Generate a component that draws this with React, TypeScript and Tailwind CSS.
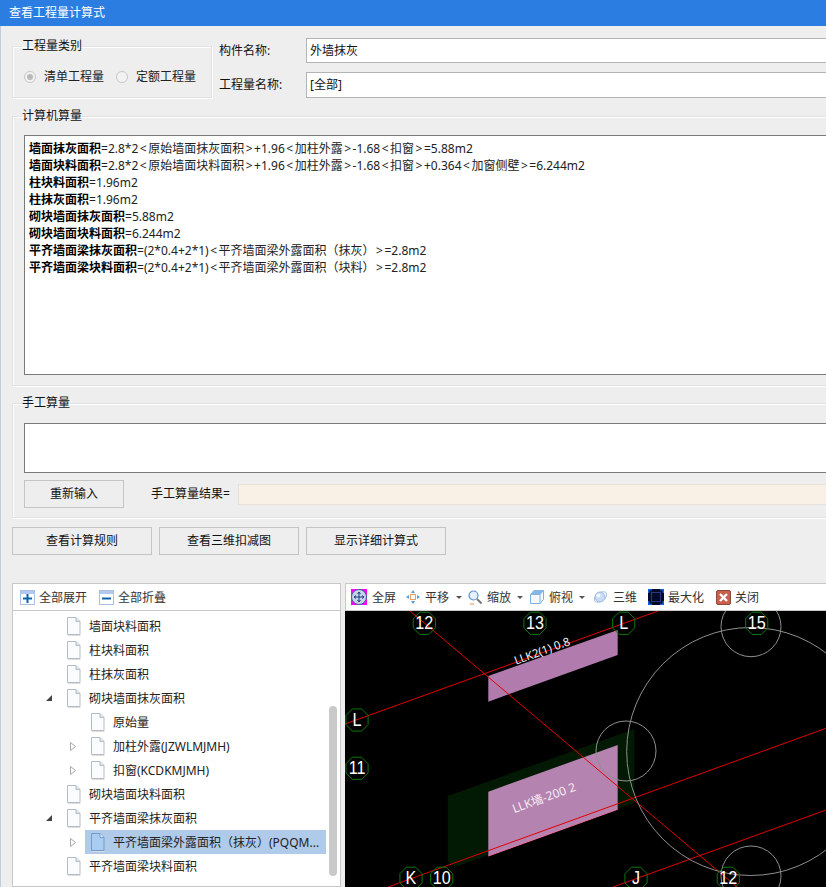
import React from 'react';

const formulas: [string, string][] = [
    ['墙面抹灰面积', '=2.8*2<原始墙面抹灰面积>+1.96<加柱外露>-1.68<扣窗>=5.88m2'],
    ['墙面块料面积', '=2.8*2<原始墙面块料面积>+1.96<加柱外露>-1.68<扣窗>+0.364<加窗侧壁>=6.244m2'],
    ['柱块料面积', '=1.96m2'],
    ['柱抹灰面积', '=1.96m2'],
    ['砌块墙面抹灰面积', '=5.88m2'],
    ['砌块墙面块料面积', '=6.244m2'],
    ['平齐墙面梁抹灰面积', '=(2*0.4+2*1)<平齐墙面梁外露面积（抹灰）>=2.8m2'],
    ['平齐墙面梁块料面积', '=(2*0.4+2*1)<平齐墙面梁外露面积（块料）>=2.8m2'],
];

type TreeRow = { label: string; level: 0 | 1; arrow?: 'open' | 'closed'; selected?: boolean };

const treeRows: TreeRow[] = [
    { label: '墙面块料面积', level: 0 },
    { label: '柱块料面积', level: 0 },
    { label: '柱抹灰面积', level: 0 },
    { label: '砌块墙面抹灰面积', level: 0, arrow: 'open' },
    { label: '原始量', level: 1 },
    { label: '加柱外露(JZWLMJMH)', level: 1, arrow: 'closed' },
    { label: '扣窗(KCDKMJMH)', level: 1, arrow: 'closed' },
    { label: '砌块墙面块料面积', level: 0 },
    { label: '平齐墙面梁抹灰面积', level: 0, arrow: 'open' },
    { label: '平齐墙面梁外露面积（抹灰）(PQQM...', level: 1, arrow: 'closed', selected: true },
    { label: '平齐墙面梁块料面积', level: 0 },
];

const axes = [
    { x: 79.3, y: 12.3, t: '12' },
    { x: 190, y: 12.3, t: '13' },
    { x: 278.7, y: 12.3, t: 'L' },
    { x: 411.7, y: 12.3, t: '15' },
    { x: 12, y: 109, t: 'L' },
    { x: 12, y: 157.3, t: '11' },
    { x: 66, y: 267.3, t: 'K' },
    { x: 96.7, y: 267.3, t: '10' },
    { x: 291, y: 267.3, t: 'J' },
    { x: 383.3, y: 267.3, t: '12' },
];

const octagon = (cx: number, cy: number) => {
    const pts: string[] = [];
    for (let i = 0; i < 8; i++) {
        const a = (Math.PI / 4) * i + Math.PI / 8;
        pts.push(`${cx + 12 * Math.cos(a)},${cy + 12 * Math.sin(a)}`);
    }
    return pts.join(' ');
};

const DocIcon = ({ selected }: { selected?: boolean }) => (
    <svg width="15" height="19" viewBox="0 0 15 19" className="shrink-0">
        <path d="M1.5 .5H10L14 4.5V17.5H1.5Z" fill={selected ? '#a9cdf0' : '#fbfcfe'} stroke={selected ? '#6f9cc8' : '#b4bcc8'} />
        <path d="M10 .5V4.5H14" fill="#dfe6f0" stroke={selected ? '#6f9cc8' : '#b4bcc8'} />
        <path d="M2 18.5H14.5" stroke="#dcdcdc" />
    </svg>
);

const Caret = () => (
    <svg width="6" height="3" viewBox="0 0 6 3" className="shrink-0">
        <path d="M0 0H6L3 3Z" fill="#555" />
    </svg>
);

const ToolItem = ({ icon, label, gap = 'gap-[5px]' }: { icon: React.ReactNode; label: string; gap?: string }) => (
    <div className={`flex items-center ${gap}`}>
        {icon}
        <span className="pt-[1px] text-[12px] text-[#333]">{label}</span>
    </div>
);

const Group = ({ title, className, children }: { title: string; className: string; children: React.ReactNode }) => (
    <fieldset className={`border border-[#e2e2e2] shadow-[1px_1px_0_#fff,inset_1px_1px_0_#fff] ${className}`}>
        <legend className="-ml-[2px] text-[12px] leading-[14px] text-[#111]">{title}</legend>
        {children}
    </fieldset>
);

const GrayButton = ({ label, className }: { label: string; className: string }) => (
    <button className={`border border-[#c4c4c4] bg-[#eeeeee] text-[12px] text-[#111] ${className}`}>{label}</button>
);

const Radio = ({ checked, label }: { checked?: boolean; label: string }) => (
    <div className="flex items-center gap-[8px]">
        <span className="flex h-[12px] w-[12px] items-center justify-center rounded-full border border-[#c8c8c8] bg-[#f2f2f2]">
            {checked && <span className="h-[6px] w-[6px] rounded-full bg-[#b8b8b8]" />}
        </span>
        <span className="text-[12px] text-[#222]">{label}</span>
    </div>
);

// chevrons sit with a little air around them in the original
const FormulaRest = ({ text }: { text: string }) => (
    <>
        {text.split(/([<>])/).map((part, i) =>
            part === '<' || part === '>' ? (
                <span key={i} className="mx-[1.5px]">
                    {part}
                </span>
            ) : (
                <span key={i}>{part}</span>
            ),
        )}
    </>
);

const CadView = () => (
    <svg width="481" height="276" viewBox="0 0 481 276" className="block bg-black">
        <polygon points="102.7,185 289.3,118 289.3,192 286,193 110,256 102.7,251" fill="#021a04" />
        <polygon points="143.3,65 272.7,19 272.7,44 143.3,90.7" fill="#b17bad" />
        <polygon points="143.3,180.7 272.7,134 272.7,198.3 143.3,245" fill="#b583b0" />
        <g stroke="#e00000" strokeWidth="1" fill="none">
            <line x1="0" y1="113" x2="313" y2="0" />
            <line x1="65" y1="0" x2="392" y2="276" />
            <line x1="43" y1="276" x2="481" y2="117.3" />
            <line x1="268" y1="276" x2="481" y2="199" />
        </g>
        <line x1="143.3" y1="245" x2="272.7" y2="198.3" stroke="#f070a0" strokeWidth="1" />
        <g stroke="#8f8f8f" strokeWidth="1" fill="none">
            <circle cx="405.7" cy="140.5" r="124" />
            <circle cx="281" cy="140" r="30" />
            <circle cx="406" cy="15.7" r="30" />
            <circle cx="406" cy="265" r="30" />
        </g>
        {axes.map((a, i) => (
            <g key={i}>
                <polygon points={octagon(a.x, a.y)} fill="none" stroke="#0a7a0a" strokeWidth="1" />
                <g transform={`translate(${a.x} 0) scale(0.85 1)`}>
                    <text x="0" y={a.y + 6} textAnchor="middle" fontSize="19" fill="#fff" fontFamily="'Liberation Sans', sans-serif">
                        {a.t}
                    </text>
                </g>
            </g>
        ))}
        <text x="197" y="44" textAnchor="middle" fontSize="11.5" fill="#f4f0f4" transform="rotate(-20 197 40)" fontFamily="'Noto Sans', 'Noto Sans CJK SC', sans-serif">
            LLK2(1) 0.8
        </text>
        <text x="199" y="191" textAnchor="middle" fontSize="12" fill="#f4eef4" transform="rotate(-20 199 187)" fontFamily="'Noto Sans', 'Noto Sans CJK SC', sans-serif">
            LLK墙-200 2
        </text>
    </svg>
);

const App = () => {
    return (
        <div className="relative h-[887px] w-[826px] overflow-hidden bg-[#eeeeee] font-['Noto_Sans','Noto_Sans_CJK_SC',sans-serif]">
            <div className="flex h-[26px] items-center bg-[#2b7de1] pl-[9px] text-[12px] text-white">查看工程量计算式</div>

            <div className="flex h-[861px] w-[930px] flex-col border-l border-[#c3cde0] pl-[11px]">
                {/* top: type and names */}
                <div className="flex pt-[12px]">
                    <Group title="工程量类别" className="mt-[1px] h-[59px] w-[200px] pt-[15px] pl-[11px]">
                        <div className="flex gap-[12px]">
                            <Radio checked label="清单工程量" />
                            <Radio label="定额工程量" />
                        </div>
                    </Group>
                    <div className="ml-[7px] flex w-[700px] flex-col gap-[9px]">
                        <div className="flex items-center">
                            <span className="w-[87px] text-[12px] text-[#111]">构件名称:</span>
                            <div className="flex h-[25px] flex-1 items-center border border-[#b4b4b4] bg-white pl-[3px] text-[12px] text-[#111]">外墙抹灰</div>
                        </div>
                        <div className="flex items-center">
                            <span className="w-[87px] text-[12px] text-[#111]">工程量名称:</span>
                            <div className="flex h-[26px] flex-1 items-center border border-[#b4b4b4] bg-white pl-[3px] text-[12px] text-[#111]">[全部]</div>
                        </div>
                    </div>
                </div>

                {/* computed quantities */}
                <Group title="计算机算量" className="mt-[11px] h-[277px] pt-[12px] pl-[11px]">
                    <div className="h-[240px] border border-[#7a7a7a] bg-white pt-[4px] pl-[4px]">
                        {formulas.map(([name, rest]) => (
                            <div key={name} className="h-[17px] text-[12px] leading-[17px] whitespace-nowrap text-[#222]">
                                <b className="font-bold text-black">{name}</b>
                                <FormulaRest text={rest} />
                            </div>
                        ))}
                    </div>
                </Group>

                {/* manual quantities */}
                <Group title="手工算量" className="mt-[10px] h-[122px] pt-[13px] pl-[11px]">
                    <div className="h-[50px] border border-[#7a7a7a] bg-white" />
                    <div className="mt-[7px] flex items-center">
                        <GrayButton label="重新输入" className="h-[28px] w-[100px]" />
                        <span className="ml-[27px] w-[87px] text-[12px] text-[#111]">手工算量结果=</span>
                        <div className="h-[21px] flex-1 border border-[#e8e2da] bg-[#f9f0e6]" />
                    </div>
                </Group>

                <div className="mt-[9px] flex gap-[7px]">
                    <GrayButton label="查看计算规则" className="h-[28px] w-[140px]" />
                    <GrayButton label="查看三维扣减图" className="h-[28px] w-[140px]" />
                    <GrayButton label="显示详细计算式" className="h-[28px] w-[140px]" />
                </div>

                {/* tree and 3D view */}
                <div className="mt-[28px] flex min-h-0 flex-1 gap-[4px]">
                    <div className="w-[329px] border border-[#c8c8c8] bg-white">
                        <div className="flex h-[27px] items-center gap-[12px] border-b border-[#c8c8c8] pl-[7px]">
                            <ToolItem
                                label="全部展开"
                                gap="gap-[4px]"
                                icon={
                                    <svg width="15" height="15" viewBox="0 0 15 15">
                                        <rect x=".5" y=".5" width="14" height="14" fill="#fff" stroke="#a9bfe6" />
                                        <rect x="1" y="1" width="13" height="3" fill="#b4c8ee" />
                                        <path d="M7.5 4V13M3 8.5H12" stroke="#0f62ac" strokeWidth="2" />
                                    </svg>
                                }
                            />
                            <ToolItem
                                label="全部折叠"
                                gap="gap-[4px]"
                                icon={
                                    <svg width="15" height="15" viewBox="0 0 15 15">
                                        <rect x=".5" y=".5" width="14" height="14" fill="#fff" stroke="#a9bfe6" />
                                        <rect x="1" y="1" width="13" height="3" fill="#b4c8ee" />
                                        <path d="M3 8.5H12" stroke="#0f62ac" strokeWidth="2" />
                                    </svg>
                                }
                            />
                        </div>
                        <div className="flex">
                            <div className="w-[316px] pt-[3px]">
                                {treeRows.map((row) => (
                                    <div key={row.label} className={`flex h-[24px] items-center ${row.level === 0 ? 'pl-[33px]' : 'pl-[57px]'}`}>
                                        <div className="flex w-[20px] shrink-0 justify-start">
                                            {row.arrow === 'open' && (
                                                <svg width="6" height="6" viewBox="0 0 6 6">
                                                    <path d="M6 0V6H0Z" fill="#444" />
                                                </svg>
                                            )}
                                            {row.arrow === 'closed' && (
                                                <svg width="6" height="9" viewBox="0 0 6 9">
                                                    <path d="M.5 .5L5.5 4.5L.5 8.5Z" fill="#fff" stroke="#a8a8a8" />
                                                </svg>
                                            )}
                                        </div>
                                        <div className={`flex h-[24px] flex-1 items-center gap-[8px] ${row.selected ? '-ml-[5px] mr-[3px] bg-[#b0cbea] pl-[5px]' : ''}`}>
                                            <DocIcon selected={row.selected} />
                                            <span className="pt-[1px] text-[12px] whitespace-nowrap text-[#222]">{row.label}</span>
                                        </div>
                                    </div>
                                ))}
                            </div>
                            <div className="mt-[95px] h-[170px] w-[8px] rounded-full bg-[#c9c9c9]" />
                        </div>
                    </div>

                    <div className="flex-1 border-t border-l border-[#c8c8c8] bg-white">
                        <div className="flex h-[27px] items-center border-b border-[#c8c8c8] pl-[5px]">
                            <ToolItem
                                label="全屏"
                                gap="gap-[5px]"
                                icon={
                                    <svg width="16" height="16" viewBox="0 0 16 16">
                                        <rect width="16" height="16" fill="#f0f" />
                                        <circle cx="8" cy="8" r="7.5" fill="#c6d4ea" stroke="#46618f" />
                                        <path d="M8 3V13M3 8H13M8 3L6.5 5M8 3L9.5 5M8 13L6.5 11M8 13L9.5 11M3 8L5 6.5M3 8L5 9.5M13 8L11 6.5M13 8L11 9.5" stroke="#1f3f7a" fill="none" />
                                    </svg>
                                }
                            />
                            <div className="ml-[10px] flex items-center gap-[7px]">
                                <ToolItem
                                    label="平移"
                                    gap="gap-[5px]"
                                    icon={
                                        <svg width="14" height="14" viewBox="0 0 14 14">
                                            <rect x="4.5" y="4.5" width="5" height="5" fill="#fff" stroke="#e8a060" />
                                            <path d="M7 0L9 3H5ZM7 14L5 11H9ZM0 7L3 5V9ZM14 7L11 9V5Z" fill="#5a9be0" />
                                        </svg>
                                    }
                                />
                                <Caret />
                            </div>
                            <div className="ml-[6px] flex items-center gap-[6px]">
                                <ToolItem
                                    label="缩放"
                                    gap="gap-[5px]"
                                    icon={
                                        <svg width="14" height="15" viewBox="0 0 14 15">
                                            <circle cx="5.5" cy="5.5" r="4.5" fill="#e6f1fb" stroke="#5c93cc" strokeWidth="1.2" />
                                            <path d="M9 9L13.5 13.5" stroke="#777" strokeWidth="2" />
                                            <path d="M2 14H6" stroke="#e09050" />
                                        </svg>
                                    }
                                />
                                <Caret />
                            </div>
                            <div className="ml-[7px] flex items-center gap-[6px]">
                                <ToolItem
                                    label="俯视"
                                    gap="gap-[5px]"
                                    icon={
                                        <svg width="14" height="14" viewBox="0 0 14 14">
                                            <path d="M.5 4.5L4 .5H13.5V9.5L10 13.5H.5Z" fill="#f4f9fe" stroke="#7fb0e0" />
                                            <path d="M.5 4.5H10V13.5M10 4.5L13.5 .5" fill="none" stroke="#7fb0e0" />
                                            <path d="M4 .5H13.5L10 4.5H.5Z" fill="#8ab6e6" />
                                        </svg>
                                    }
                                />
                                <Caret />
                            </div>
                            <div className="ml-[8px]">
                                <ToolItem
                                    label="三维"
                                    gap="gap-[5px]"
                                    icon={
                                        <svg width="15" height="14" viewBox="0 0 15 14">
                                            <ellipse cx="7.5" cy="7" rx="7" ry="4" transform="rotate(-35 7.5 7)" fill="none" stroke="#a8c4e4" />
                                            <circle cx="7" cy="7" r="5" fill="#c9dcf3" stroke="#9dbbe0" />
                                            <circle cx="5.5" cy="5.5" r="2" fill="#f2f7fd" />
                                        </svg>
                                    }
                                />
                            </div>
                            <div className="ml-[11px]">
                                <ToolItem
                                    label="最大化"
                                    gap="gap-[4px]"
                                    icon={
                                        <svg width="16" height="16" viewBox="0 0 16 16">
                                            <rect width="16" height="16" fill="#050a2a" />
                                            <rect x="3.5" y="3.5" width="9" height="9" fill="none" stroke="#2a3a80" />
                                            <path d="M0 0H4V1.5H1.5V4H0ZM16 0V4H14.5V1.5H12V0ZM0 16V12H1.5V14.5H4V16ZM16 16H12V14.5H14.5V12H16Z" fill="#0a5fe0" />
                                        </svg>
                                    }
                                />
                            </div>
                            <div className="ml-[12px]">
                                <ToolItem
                                    label="关闭"
                                    gap="gap-[4px]"
                                    icon={
                                        <svg width="15" height="15" viewBox="0 0 15 15">
                                            <rect x=".5" y=".5" width="14" height="14" rx="1.5" fill="#c8604c" stroke="#8a4a3e" />
                                            <path d="M4 4L11 11M11 4L4 11" stroke="#fff" strokeWidth="2.4" />
                                        </svg>
                                    }
                                />
                            </div>
                        </div>
                        <div className="-ml-[1px]">
                            <CadView />
                        </div>
                    </div>
                </div>
            </div>
        </div>
    );
};

export default App;
